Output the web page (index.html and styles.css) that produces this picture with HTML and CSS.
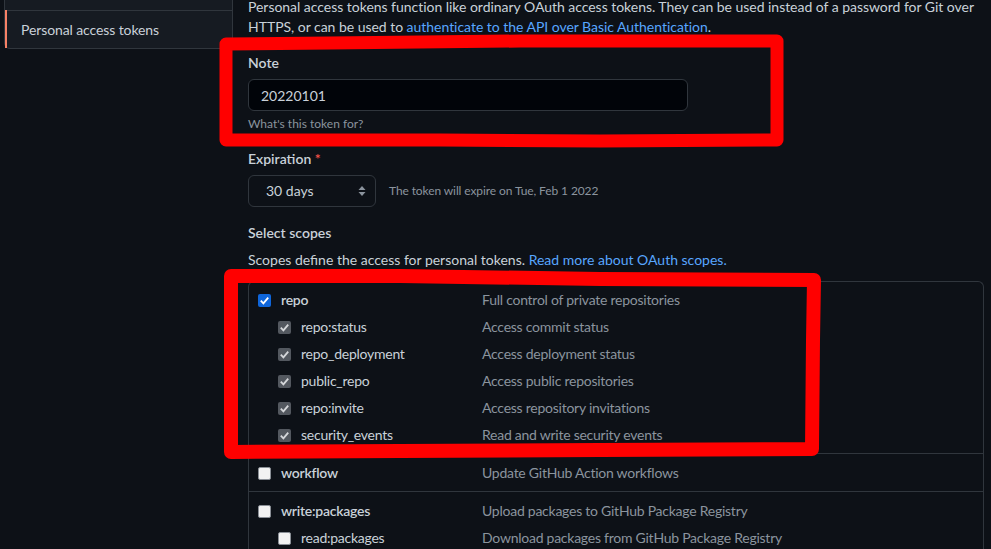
FILE: index.html
```html
<!DOCTYPE html>
<html lang="en">
<head>
<meta charset="utf-8">
<title>Personal access tokens</title>
<link rel="stylesheet" href="styles.css">
</head>
<body>
<div class="page">
  <nav class="side">
    <div class="side-item"></div>
    <div class="side-item active">Personal access tokens</div>
  </nav>
  <main class="main">
    <p class="intro">Personal access tokens function like ordinary OAuth access tokens. They can be used instead of a password for Git over HTTPS, or can be used to <a href="#">authenticate to the API over Basic Authentication</a>.</p>

    <div class="field note-field">
      <div class="label">Note</div>
      <div class="input">20220101</div>
      <div class="hint">What's this token for?</div>
    </div>

    <div class="field">
      <div class="label">Expiration <span class="req">*</span></div>
      <div class="exp-row">
        <div class="select">
          <span>30 days</span>
          <svg class="arrows" width="8" height="12" viewBox="0 0 8 12"><path d="M4 1 L7.5 5 L0.5 5 Z M4 11 L7.5 7 L0.5 7 Z" fill="#8b949e"/></svg>
        </div>
        <span class="exp-note">The token will expire on Tue, Feb 1 2022</span>
      </div>
    </div>

    <div class="scopes-head">Select scopes</div>
    <p class="scopes-desc">Scopes define the access for personal tokens. <a href="#">Read more about OAuth scopes.</a></p>

    <div class="scopes">
      <div class="group first">
        <div class="row">
          <span class="name top"><span class="cb on"><svg viewBox="0 0 14 14"><path d="M3 7.2 L5.8 10 L11 4" fill="none" stroke="#fff" stroke-width="2"/></svg></span>repo</span>
          <span class="desc">Full control of private repositories</span>
        </div>
        <div class="row">
          <span class="name sub"><span class="cb dis"><svg viewBox="0 0 14 14"><path d="M3 7.2 L5.8 10 L11 4" fill="none" stroke="#d5d7da" stroke-width="2"/></svg></span>repo:status</span>
          <span class="desc">Access commit status</span>
        </div>
        <div class="row">
          <span class="name sub"><span class="cb dis"><svg viewBox="0 0 14 14"><path d="M3 7.2 L5.8 10 L11 4" fill="none" stroke="#d5d7da" stroke-width="2"/></svg></span>repo_deployment</span>
          <span class="desc">Access deployment status</span>
        </div>
        <div class="row">
          <span class="name sub"><span class="cb dis"><svg viewBox="0 0 14 14"><path d="M3 7.2 L5.8 10 L11 4" fill="none" stroke="#d5d7da" stroke-width="2"/></svg></span>public_repo</span>
          <span class="desc">Access public repositories</span>
        </div>
        <div class="row">
          <span class="name sub"><span class="cb dis"><svg viewBox="0 0 14 14"><path d="M3 7.2 L5.8 10 L11 4" fill="none" stroke="#d5d7da" stroke-width="2"/></svg></span>repo:invite</span>
          <span class="desc">Access repository invitations</span>
        </div>
        <div class="row">
          <span class="name sub"><span class="cb dis"><svg viewBox="0 0 14 14"><path d="M3 7.2 L5.8 10 L11 4" fill="none" stroke="#d5d7da" stroke-width="2"/></svg></span>security_events</span>
          <span class="desc">Read and write security events</span>
        </div>
      </div>
      <div class="group">
        <div class="row">
          <span class="name top"><span class="cb off"></span>workflow</span>
          <span class="desc">Update GitHub Action workflows</span>
        </div>
      </div>
      <div class="group">
        <div class="row">
          <span class="name top"><span class="cb off"></span>write:packages</span>
          <span class="desc">Upload packages to GitHub Package Registry</span>
        </div>
        <div class="row">
          <span class="name sub"><span class="cb off"></span>read:packages</span>
          <span class="desc">Download packages from GitHub Package Registry</span>
        </div>
      </div>
    </div>
  </main>
</div>

<svg class="annot" width="991" height="549" viewBox="0 0 991 549">
  <path d="M226 44 L330 43 L520 41 L777 41 L777 140 L600 141 L440 140 L226 140 Z" fill="none" stroke="#ff0000" stroke-width="13" stroke-linejoin="round"/>
  <path d="M231 276 L400 276 L600 279 L814 280 L813 340 L812 449 L600 450 L400 451 L231 452 Z" fill="none" stroke="#ff0000" stroke-width="14" stroke-linejoin="round"/>
</svg>
</body>
</html>
```
FILE: styles.css
```css
* { box-sizing: border-box; }

html, body {
  margin: 0;
  padding: 0;
  background: #0d1117;
  overflow: hidden;
}

body {
  width: 991px;
  height: 549px;
  position: relative;
  font-family: Lato, "Noto Sans", "Liberation Sans", sans-serif;
  font-size: 14px;
  line-height: 20px;
  color: #c9d1d9;
}

a { color: #58a6ff; text-decoration: none; }

.page {
  display: flex;
  gap: 15px;
  margin-top: -3px;
  padding-left: 4px;
}

.side {
  flex: 0 0 229px;
  margin-top: -25px;
  align-self: flex-start;
  background: #161b22;
  border: 1px solid #30363d;
  border-radius: 0 0 6px 6px;
  letter-spacing: -0.1px;
}

.side-item {
  height: 38px;
  padding: 9px 16px;
  border-top: 1px solid #30363d;
  position: relative;
}
.side-item:first-child { border-top: 0; height: 37px; }

.side-item.active::before {
  content: "";
  position: absolute;
  left: 0;
  top: -1px;
  bottom: 0;
  width: 2px;
  background: #f78166;
}

.main {
  width: 736px;
  display: flex;
  flex-direction: column;
}

.intro { margin: 0; letter-spacing: -0.03px; }

.field { display: flex; flex-direction: column; }

.note-field { margin-top: 16px; }

.label {
  font-weight: 600;
  margin-bottom: 6px;
}

.req { color: #f85149; }

.input {
  width: 440px;
  height: 32px;
  padding: 6px 12px 4px;
  background: #010409;
  border: 1px solid #30363d;
  border-radius: 6px;
}

.hint {
  margin-top: 4px;
  font-size: 12px;
  line-height: 18px;
  color: #8b949e;
}

.field + .field { margin-top: 16px; }

.exp-row {
  display: flex;
  align-items: center;
  gap: 13px;
}

.select {
  width: 128px;
  height: 32px;
  padding: 5px 9px 5px 17px;
  border: 1px solid #30363d;
  border-radius: 6px;
  display: flex;
  align-items: center;
  justify-content: space-between;
}

.exp-note {
  font-size: 12px;
  color: #8b949e;
  letter-spacing: -0.1px;
}

.scopes-head {
  margin-top: 16px;
  font-weight: 600;
}

.scopes-desc { margin: 7px 0 0; }

.scopes {
  margin-top: 11px;
  border: 1px solid #30363d;
  border-bottom: 0;
  border-radius: 6px 6px 0 0;
  letter-spacing: -0.25px;
}

.group {
  display: flex;
  flex-direction: column;
  gap: 7px;
  padding: 9px 0 8px 9px;
  border-top: 1px solid #30363d;
}
.group.first { border-top: 0; padding-top: 8px; }

.row {
  display: grid;
  grid-template-columns: 224px 1fr;
  height: 20px;
  align-items: center;
}

.name {
  display: flex;
  align-items: center;
  color: #c9d1d9;
}
.name.top { font-weight: 600; }
.name.sub { padding-left: 20px; }

.desc { color: #8b949e; }

.cb {
  width: 13px;
  height: 13px;
  margin-right: 10px;
  border-radius: 2px;
  display: inline-flex;
  flex: 0 0 13px;
}
.cb svg { width: 13px; height: 13px; }
.cb.on { background: #0f66db; }
.cb.dis { background: #53585f; }
.cb.off { background: #f2f2f2; border: 1.5px solid #8a8f96; }

.annot {
  position: absolute;
  left: 0;
  top: 0;
  pointer-events: none;
}
```
